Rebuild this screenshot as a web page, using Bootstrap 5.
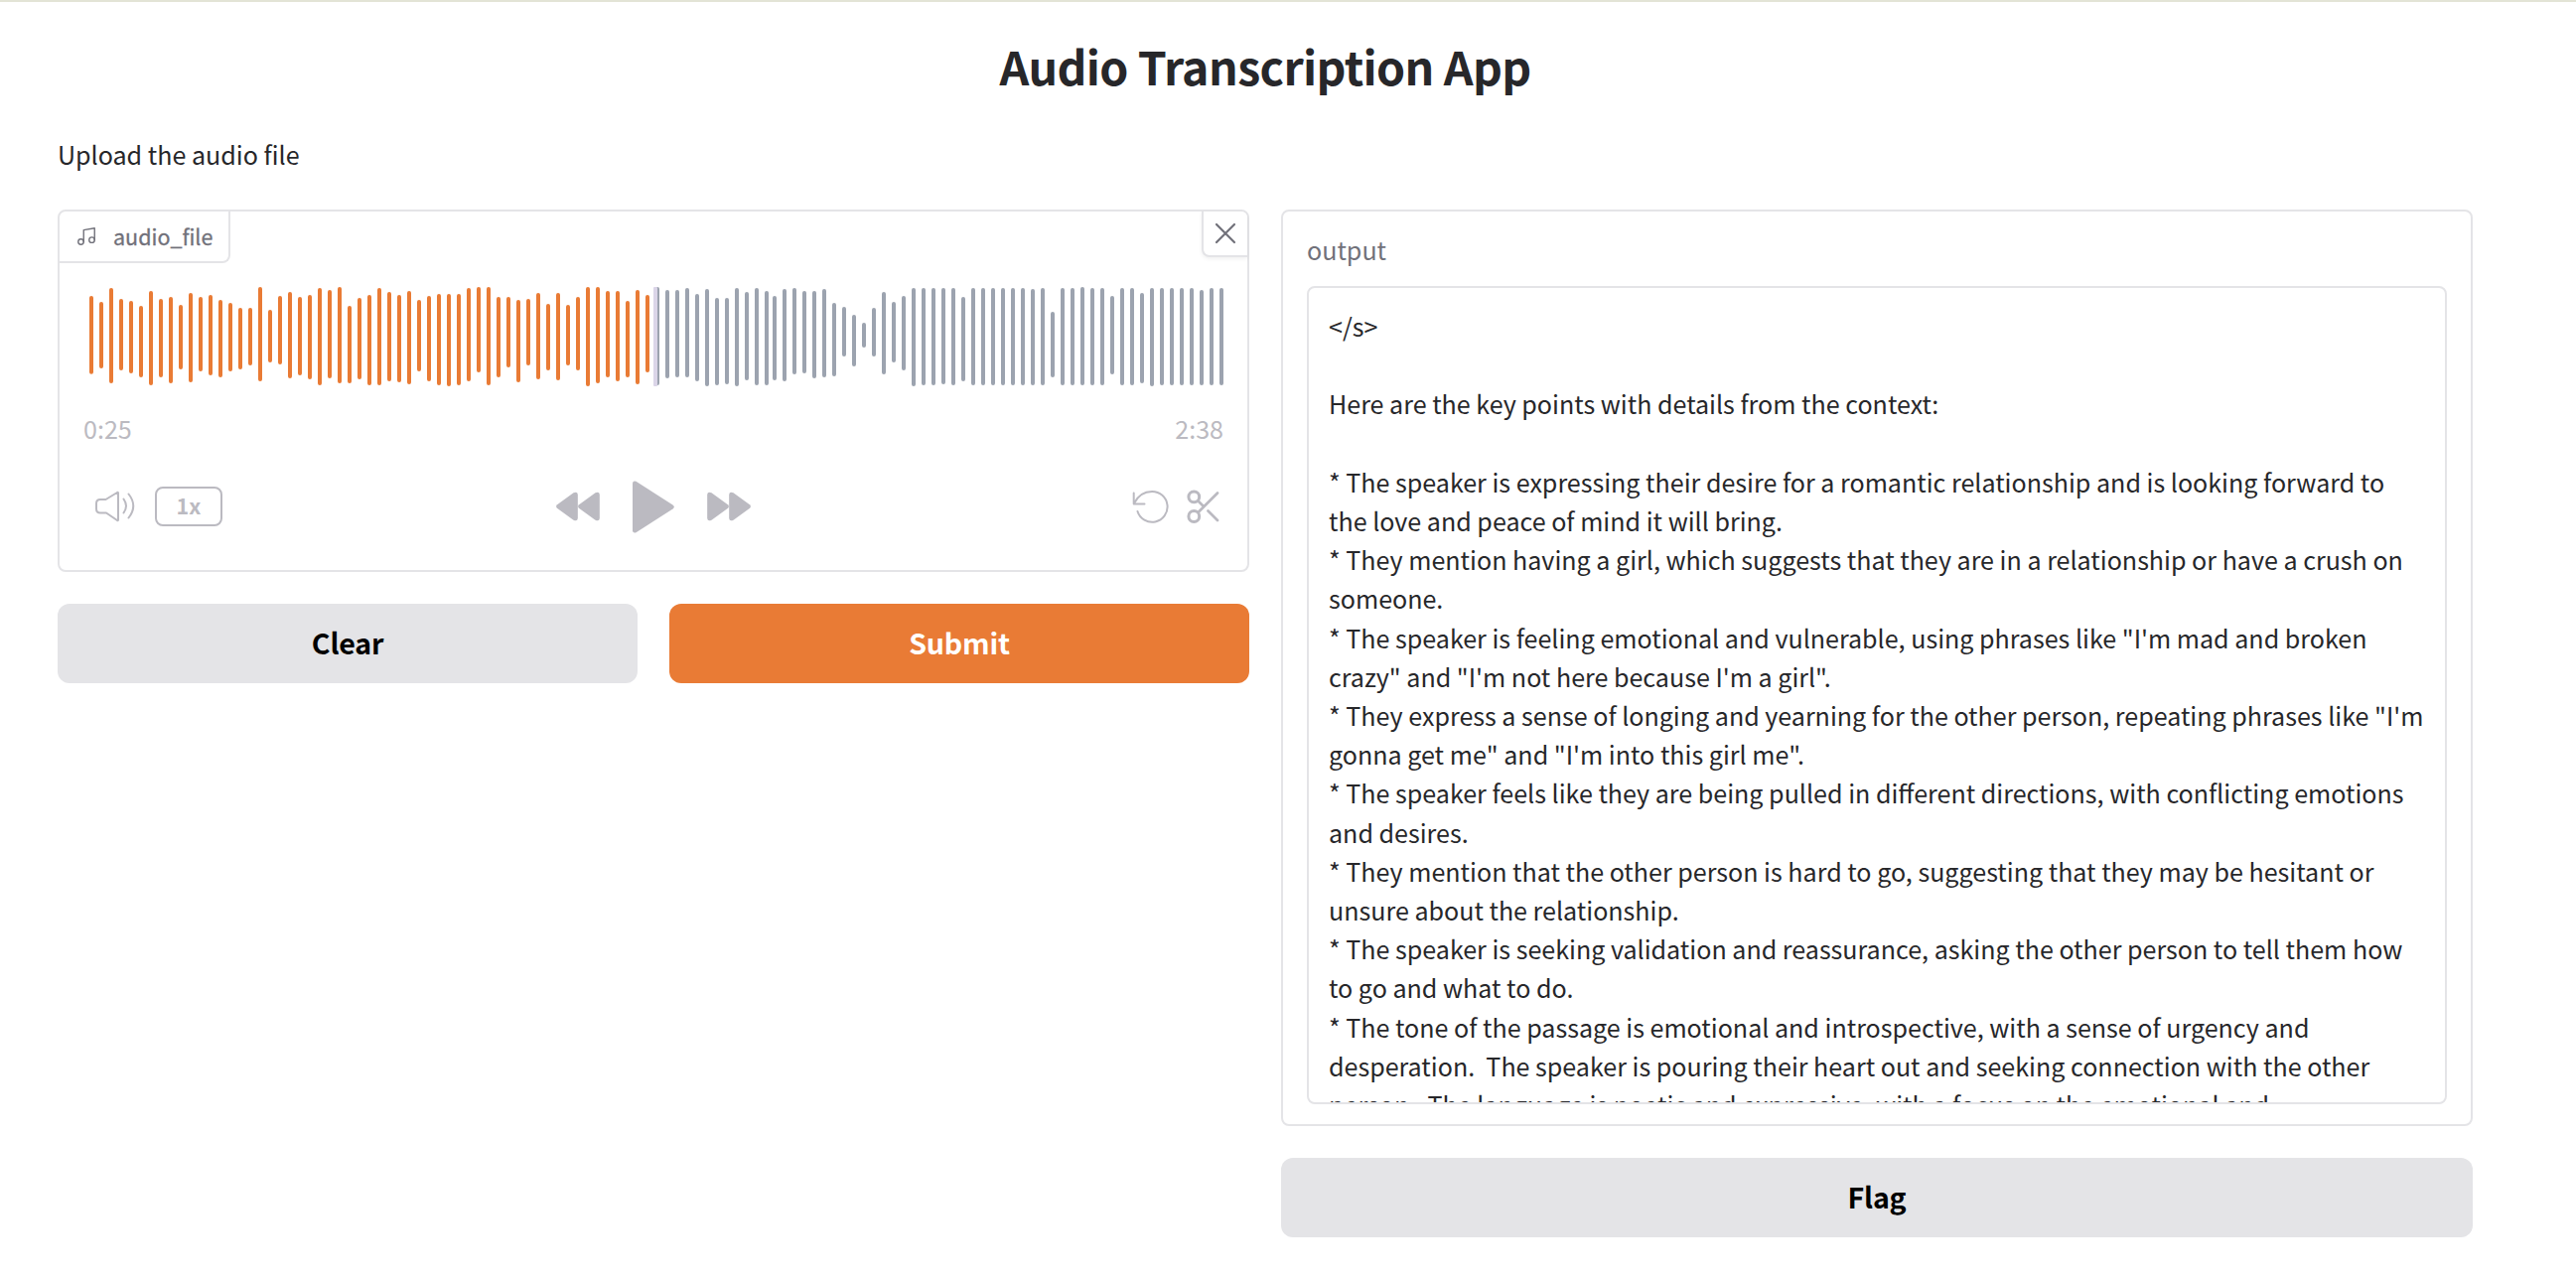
<!DOCTYPE html>
<html lang="en">
<head>
<meta charset="utf-8">
<title>Audio Transcription App</title>
<link href="https://cdn.jsdelivr.net/npm/bootstrap@5.3.0/dist/css/bootstrap.min.css" rel="stylesheet">
<style>
body{font-family:"Noto Sans CJK SC","Noto Sans",sans-serif;font-size:25.07px;line-height:39.2px;color:#27272a;background:#fff;overflow:hidden}
.app{border-top:2px solid #e3e4d6;padding:34px 104px 0 58px;height:1288px}
.app-title{font-size:46.5px;line-height:60px;font-weight:700;letter-spacing:-.62px;margin:0 0 39px}
.intro{height:40px;line-height:40px;margin:0 0 36px}
.columns{gap:32px}
.panel{border:2px solid #e4e4e7;border-radius:8px;background:#fff}
.audio-panel{height:365px}
.tag{width:172px;height:52px;border:solid #e4e4e7;border-width:0 2px 2px 0;border-radius:0 0 8px 0;color:#71717a;font-size:21.5px;-webkit-text-stroke:.3px #71717a;padding:0 0 1px 16px;gap:16px}
.close-box{width:46px;height:46px;border:solid #e4e4e7;border-width:0 0 2px 2px;border-radius:0 6px 0 8px;background:#fff;box-shadow:0 2px 4px rgba(0,0,0,.06);padding:0}
.wave{display:block;width:1142px;height:100px;margin:24px 0 0 30px}
.faint{color:#bbbac1}
.times{padding:0 24px 0 24px;height:40px;line-height:40px;margin-top:22px}
.controls{height:52px;padding:0 28px 0 36px;margin-top:33px}
.controls>div{flex:1 1 0}
.transport{gap:33px;padding-right:8px}
.speed{width:68px;height:40px;border:2px solid #bbbac1;border-radius:8px;font-size:21.5px;font-weight:700;line-height:34px;margin-left:20px}
.app-btn{height:80px;border:0;border-radius:12px;font-size:28.6px;font-weight:700;line-height:40px;padding:0 0 3px;background:#e4e4e7;color:#000;letter-spacing:-.2px}
.app-btn.go{background:#e97b35;color:#fff}
.stack{gap:32px;width:1200px}
.out-panel{height:923px;padding:18px 24px}
.out-label{color:#71717a;height:40px;line-height:40px;margin-bottom:17px}
.out-text{height:824px;border:2px solid #e4e4e7;border-radius:8px;padding:19px 20px 0;white-space:pre;overflow:hidden}
svg{flex:none}
</style>
<script src="https://cdn.jsdelivr.net/npm/bootstrap@5.3.0/dist/js/bootstrap.bundle.min.js"></script>
</head>
<body>
<main class="app">
<h1 class="app-title text-center">Audio Transcription App</h1>
<p class="intro">Upload the audio file</p>
<div class="columns d-flex align-items-start">
  <section class="stack d-flex flex-column flex-fill">
    <div class="panel audio-panel">
      <div class="d-flex justify-content-between align-items-start">
        <div class="tag d-flex align-items-center">
          <svg width="22" height="22" viewBox="0 0 24 24" fill="none" stroke="#71717a" stroke-width="1.5" stroke-linecap="round" stroke-linejoin="round"><path d="M9 18V5l12-2v13"/><circle cx="6" cy="18" r="3"/><circle cx="18" cy="16" r="3"/></svg>
          <span>audio_file</span>
        </div>
        <button class="close-box d-flex align-items-center justify-content-center" aria-label="Clear"><svg width="22" height="22" viewBox="0 0 22 22" stroke="#71717a" stroke-width="2.200" stroke-linecap="round"><path d="M2 2 20 20M20 2 2 20"/></svg></button>
      </div>
      <svg class="wave" id="wave" viewBox="0 297 3426 300"></svg>
      <div class="times faint d-flex justify-content-between"><span>0:25</span><span>2:38</span></div>
      <div class="controls faint d-flex align-items-center">
        <div class="d-flex align-items-center">
          <svg width="40" height="32" viewBox="0 0 40 32" fill="none" stroke="currentColor" stroke-width="2" stroke-linecap="round" stroke-linejoin="round"><path d="M5 9h5.500L22 2q1-.5 1 .5v27q0 1-1 .5L11 22.500H5Q1 22.500 1 18.500V13Q1 9 5 9Z"/><path d="M28.500 8.500q5 7.200 0 14M33.500 3.500q9.500 12 0 24"/></svg>
          <div class="speed text-center">1x</div>
        </div>
        <div class="transport d-flex align-items-center justify-content-center">
          <svg width="44" height="30" viewBox="0 0 44 30" fill="currentColor"><path id="rw" d="M1 13.200 17.500 1.200Q21.500-.5 21.800 3V27q-.3 3.500-4.300 1.800L1 16.800Q-.8 15 1 13.200Z"/><use href="#rw" x="22"/></svg>
          <svg width="42" height="53" viewBox="0 0 42 53" fill="currentColor"><path d="M0 2.500Q.3-.3 3.500.7L40.500 24.500Q43 26.500 40.500 28.500L3.500 52.300Q.3 53.300 0 50.500Z"/></svg>
          <svg width="44" height="30" viewBox="0 0 44 30" fill="currentColor"><g transform="matrix(-1 0 0 1 44 0)"><use href="#rw"/><use href="#rw" x="22"/></g></svg>
        </div>
        <div class="d-flex align-items-center justify-content-end" style="gap:18px">
          <svg width="37" height="34" viewBox="0 0 37 34" fill="none" stroke="currentColor" stroke-width="2" stroke-linecap="round" stroke-linejoin="round"><path d="M1.700 3.500v11h10.800M1.900 14C5 8 10.500 2 20 2a15.400 15.400 0 1 1-14.500 20"/></svg>
          <svg width="33" height="34" viewBox="0 0 33 34" fill="none" stroke="currentColor" stroke-width="3" stroke-linecap="round"><circle cx="7.300" cy="7.300" r="5.400"/><circle cx="7.300" cy="27" r="5.400"/><path d="M11.500 23 31 3.500M11.500 11.500l5.500 5.500M21.500 21.500 31 31" stroke-width="2.700"/></svg>
        </div>
      </div>
    </div>
    <div class="columns d-flex">
      <button class="btn app-btn flex-fill w-50">Clear</button>
      <button class="btn app-btn go flex-fill w-50">Submit</button>
    </div>
  </section>
  <section class="stack d-flex flex-column flex-fill">
    <div class="panel out-panel">
      <div class="out-label">output</div>
      <div class="out-text">&lt;/s&gt;

Here are the key points with details from the context:

* The speaker is expressing their desire for a romantic relationship and is looking forward to
the love and peace of mind it will bring.
* They mention having a girl, which suggests that they are in a relationship or have a crush on
someone.
* The speaker is feeling emotional and vulnerable, using phrases like "I'm mad and broken
crazy" and "I'm not here because I'm a girl".
* They express a sense of longing and yearning for the other person, repeating phrases like "I'm
gonna get me" and "I'm into this girl me".
* The speaker feels like they are being pulled in different directions, with conflicting emotions
and desires.
* They mention that the other person is hard to go, suggesting that they may be hesitant or
unsure about the relationship.
* The speaker is seeking validation and reassurance, asking the other person to tell them how
to go and what to do.
* The tone of the passage is emotional and introspective, with a sense of urgency and
desperation.  The speaker is pouring their heart out and seeking connection with the other
person.  The language is poetic and expressive, with a focus on the emotional and</div>
    </div>
    <button class="btn app-btn w-100">Flag</button>
  </section>
</div>
</main>
<script>
// Top and bottom of every waveform bar, in thirds of a pixel
const bars = "324,560 342,543 300,588 333,549 339,558 354,570 309,594 333,570 327,588 351,546 315,585 327,552 321,564 336,570 345,552 360,546 360,534 297,582 366,525 324,531 312,573 327,564 321,576 300,594 306,573 297,588 354,588 330,576 321,594 300,594 312,582 321,585 309,591 336,552 324,582 318,594 318,597 318,594 300,582 297,555 297,594 327,570 327,540 336,585 333,534 315,576 348,549 315,579 351,534 327,549 297,597 297,588 309,570 309,582 339,570 306,591 321,555 297,594 306,573 306,570 300,570 318,582 303,597 330,594 330,591 300,597 312,579 300,594 309,594 324,579 303,582 300,561 309,558 309,573 303,570 345,567 357,507 381,537 405,480 360,507 312,561 342,525 324,549 300,597 300,594 300,594 300,591 300,594 327,582 300,594 300,594 300,594 300,594 300,594 300,594 303,594 300,594 372,570 300,594 300,594 297,594 300,594 300,594 324,561 300,594 300,594 315,588 300,597 300,594 300,594 300,594 300,594 306,594 300,594 300,594".split(" ");
let out = "";
bars.forEach((b, i) => {
  const [t, e] = b.split(",").map(Number);
  const x = i * 30 - (i > 68 ? 6 : 0);
  out += `<rect x="${x}" y="${t}" width="12" height="${e - t}" rx="6" fill="${i < 57 ? "#e97b35" : "#9ca3af"}"/>`;
});
out += '<rect x="1704" y="297" width="12" height="300" rx="3" fill="#dbd5e8"/>';
document.getElementById("wave").innerHTML = out;
</script>
</body>
</html>
